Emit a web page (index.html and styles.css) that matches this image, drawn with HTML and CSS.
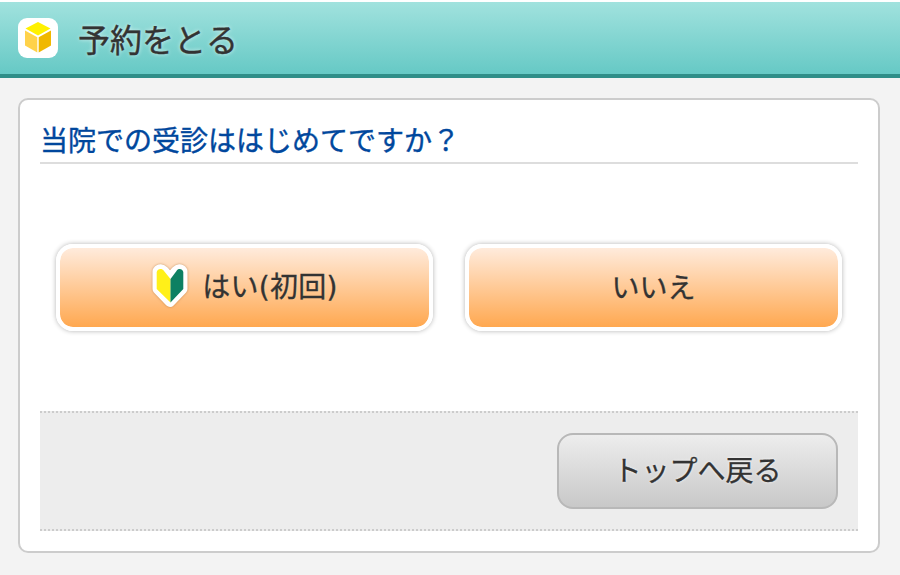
FILE: index.html
```html
<!DOCTYPE html>
<html lang="ja">
<head>
    <meta charset="UTF-8">
    <meta name="viewport" content="width=device-width, initial-scale=1.0">
    <title>予約をとる</title>
    <link rel="stylesheet" href="styles.css">
</head>
<body>
    <header class="header">
        <svg class="logo" viewBox="0 0 40 40" width="40" height="40">
            <rect width="40" height="40" rx="9" fill="#fff"/>
            <path d="M20 4 L32.5 10.5 L20 17.5 L7.5 10.5 Z" fill="#fff100"/>
            <path d="M7 12.5 L19.3 19.3 V34.5 L7 27.5 Z" fill="#ffd24a"/>
            <path d="M33 12.5 L20.7 19.3 V34.5 L33 27.5 Z" fill="#f0b800"/>
        </svg>
        <h1>予約をとる</h1>
    </header>
    <div class="container">
        <h2>当院での受診ははじめてですか？</h2>
        <div class="choices">
            <button type="button" class="choice">
                <svg class="beginner" viewBox="0 0 38 44" width="38" height="44">
                    <path d="M6.5 7 C8.5 4.5 11 5 13 7 L19 14 L25 7 C27 5 29.5 4.5 31.5 7 V25 L19 38 L6.5 25 Z" fill="#fff" stroke="#fff" stroke-width="10" stroke-linejoin="round"/>
                    <path d="M5.7 8 C6.5 4.5 11 4 13 7 L19.5 15 V38.5 L5.7 25 Z" fill="#fff019"/>
                    <path d="M32.3 8 C31.5 4.5 27 4 25.5 7 L19.5 15 V38.5 L32.3 25 Z" fill="#0d8062"/>
                </svg>
                <span class="first">はい(初回)</span>
            </button>
            <button type="button" class="choice">いいえ</button>
        </div>
        <div class="footer">
            <button type="button" class="back">トップへ戻る</button>
        </div>
    </div>
</body>
</html>
```

FILE: styles.css
```css
* {
    box-sizing: border-box;
}

body {
    margin: 0;
    border-top: 2px solid #fff;
    background-color: #f3f3f3;
    color: #333;
    font-family: "Noto Sans CJK JP", sans-serif;
}

.header {
    display: flex;
    align-items: center;
    gap: 20px;
    height: 76px;
    padding: 0 18px;
    border-bottom: 4px solid #2f8e88;
    background: linear-gradient(#a1e2de, #66c9c5);
}

h1 {
    margin: 0;
    padding-bottom: 1px;
    font-size: 32px;
    font-weight: 400;
    line-height: 40px;
    -webkit-text-stroke: 0.4px;
    text-shadow: 0 0 4px rgba(255, 255, 255, 0.8);
}

.container {
    height: 455px;
    margin: 20px 20px 0 18px;
    padding: 18px 20px 20px;
    border: 2px solid #ccc;
    border-radius: 10px;
    background-color: #fff;
}

h2 {
    height: 46px;
    margin: 0;
    border-bottom: 2px solid #ddd;
    color: #00479d;
    font-size: 28px;
    font-weight: 400;
    line-height: 42px;
    -webkit-text-stroke: 0.4px;
}

.choices {
    display: flex;
    gap: 32px;
    padding: 80px 16px;
}

button {
    padding: 0 0 4px;
    color: #333;
    font-family: inherit;
    font-size: 28px;
    line-height: 40px;
    -webkit-text-stroke: 0.3px;
    cursor: pointer;
}

.choice {
    display: flex;
    flex: 1;
    align-items: center;
    justify-content: center;
    gap: 13px;
    height: 87px;
    border: 4px solid #fff;
    border-radius: 17px;
    background: linear-gradient(#ffebdc, #ffa850) padding-box;
    box-shadow: 0 0 5px rgba(0, 0, 0, 0.3);
}

.beginner {
    filter: drop-shadow(0 0 1px rgba(150, 80, 20, 0.5));
}

.first {
    padding-top: 5px;
    font-family: "DejaVu Sans", "Noto Sans CJK JP", sans-serif;
    letter-spacing: 0.3px;
}

.footer {
    display: flex;
    align-items: center;
    justify-content: flex-end;
    height: 120px;
    padding-right: 20px;
    border-top: 2px dotted #ccc;
    border-bottom: 2px dotted #ccc;
    background-color: #ededed;
}

.back {
    width: 281px;
    height: 76px;
    border: 2px solid #b8b8b8;
    border-radius: 16px;
    background: linear-gradient(#ededed, #c8c8c8);
    text-shadow: 0 0 3px #fff;
}
```
